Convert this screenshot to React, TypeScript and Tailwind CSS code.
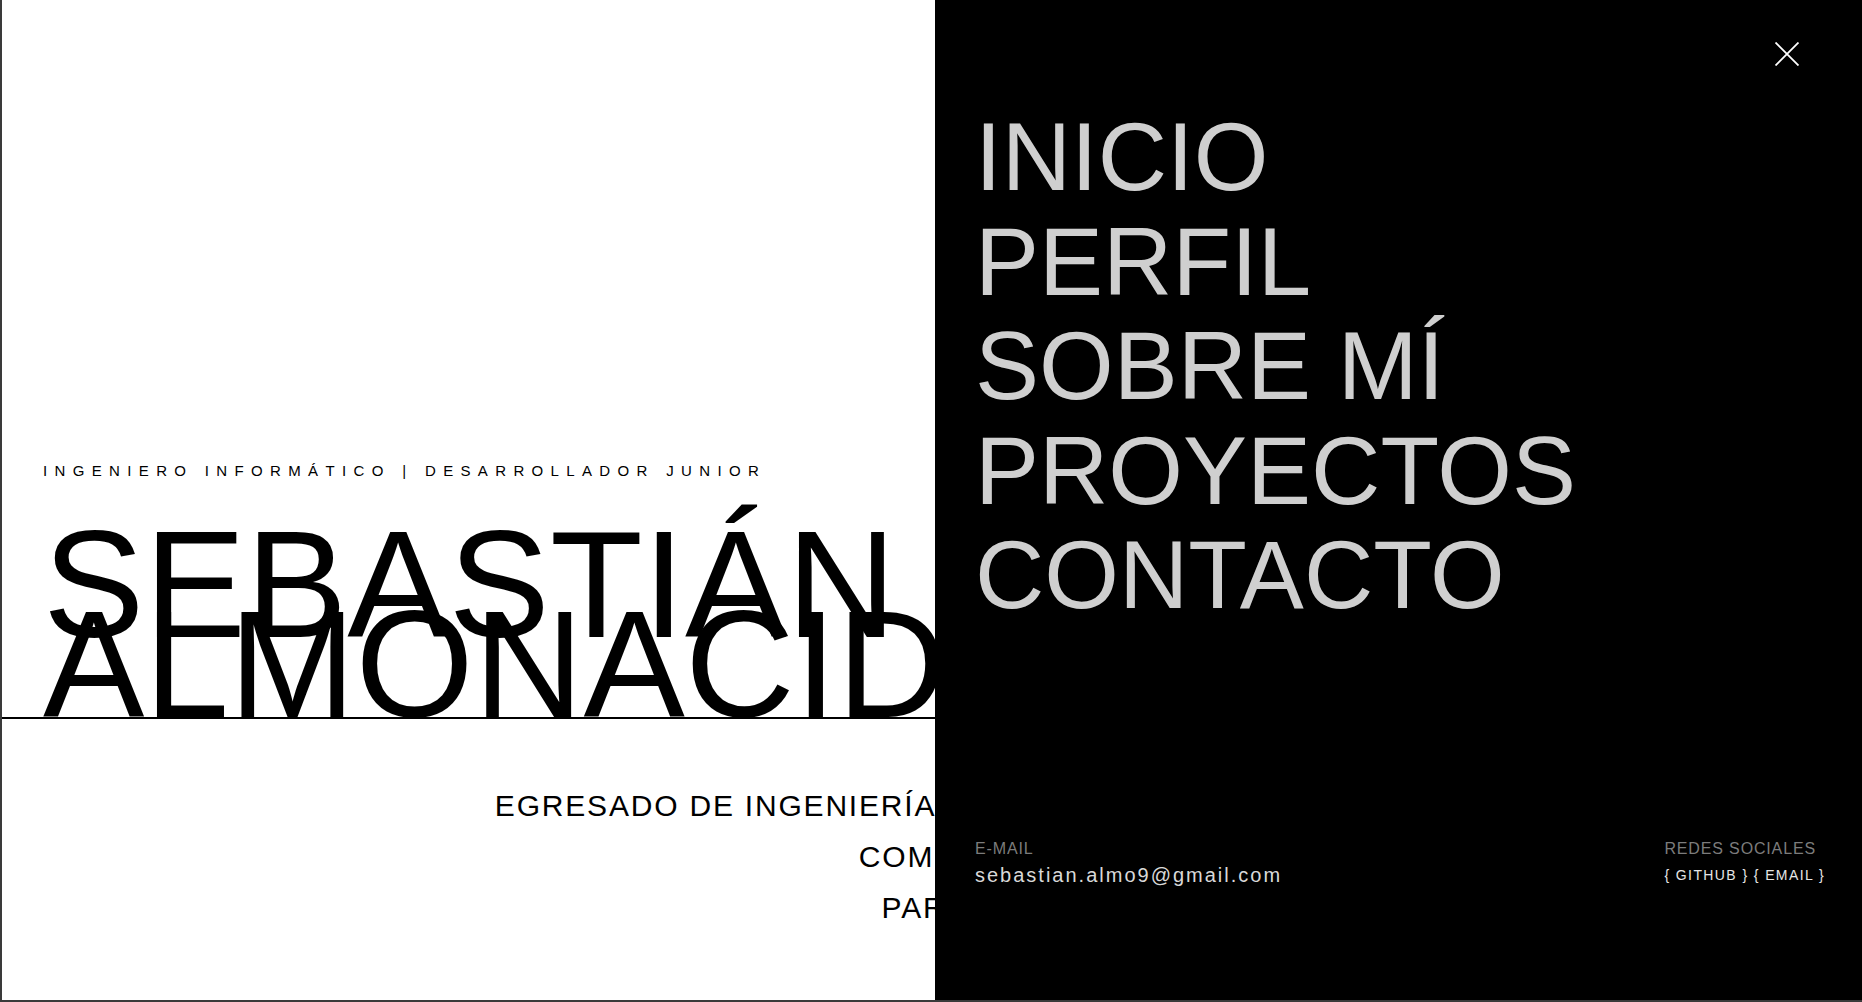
import React from "react";

const menu = ["INICIO", "PERFIL", "SOBRE MÍ", "PROYECTOS", "CONTACTO"];

export default function App() {
  return (
    <div className="relative w-[1862px] h-[1002px] overflow-hidden bg-white border-l-2 border-b-2 border-[#3a3a3a] font-['Liberation_Sans',Arial,sans-serif] text-black">
      {/* Page content */}
      <main className="flex flex-col pt-[463px]">
        <p className="pl-[41px] text-[15px] leading-[15px] tracking-[7.35px] whitespace-nowrap">
          INGENIERO INFORMÁTICO | DESARROLLADOR JUNIOR
        </p>
        <h1 className="mt-[66px] border-b-2 border-black pb-[13px] pl-[41px] text-[152px] leading-[80px] font-normal whitespace-nowrap">
          <span className="block">SEBASTIÁN</span>
          <span className="block">ALMONACID</span>
        </h1>
        <div className="mt-[61px] w-[1430px] text-right text-[30px] leading-[51px] tracking-[0.06em] whitespace-nowrap">
          <p>EGRESADO DE INGENIERÍA EN INFORMÁTICA Y SISTEMAS</p>
          <p className="pr-[6px]">COMPROMETIDO CON LA CALIDAD,</p>
          <p className="pr-[11px]">PARA CREAR SOLUCIONES DE TI.</p>
        </div>
      </main>

      {/* Menu overlay */}
      <aside className="absolute top-0 right-0 bottom-[-2px] w-[927px] bg-black flex flex-col">
        <button className="absolute top-[42px] right-[63px] w-6 h-6" aria-label="Cerrar">
          <svg viewBox="0 0 24 24" width="24" height="24" fill="none" stroke="#ffffff" strokeWidth="1.8">
            <path d="M0.5 0.5 L23.5 23.5 M23.5 0.5 L0.5 23.5" />
          </svg>
        </button>
        <nav className="pt-[105px] pl-[40px]">
          {menu.map((m) => (
            <a key={m} className="block text-[96px] leading-[104.5px] text-[#cfcfcf] whitespace-nowrap">
              {m}
            </a>
          ))}
        </nav>
        <footer className="mt-auto flex justify-between items-start pl-[40px] pr-[37px] pb-[117px]">
          <div className="flex flex-col">
            <span className="text-[16px] leading-[16px] tracking-[0.85px] text-[#7c7c7c]">E-MAIL</span>
            <span className="mt-[8.5px] text-[20px] leading-[20px] tracking-[0.1em] text-[#d9d9d9]">
              sebastian.almo9@gmail.com
            </span>
          </div>
          <div className="flex flex-col">
            <span className="text-[16px] leading-[16px] tracking-[0.85px] text-[#7c7c7c]">REDES SOCIALES</span>
            <div className="mt-[11.5px] text-[14px] leading-[14px] tracking-[0.1em] text-[#e6e6e6] whitespace-nowrap">
              <a>{"{ GITHUB }"}</a> <a>{"{ EMAIL }"}</a>
            </div>
          </div>
        </footer>
      </aside>
    </div>
  );
}
